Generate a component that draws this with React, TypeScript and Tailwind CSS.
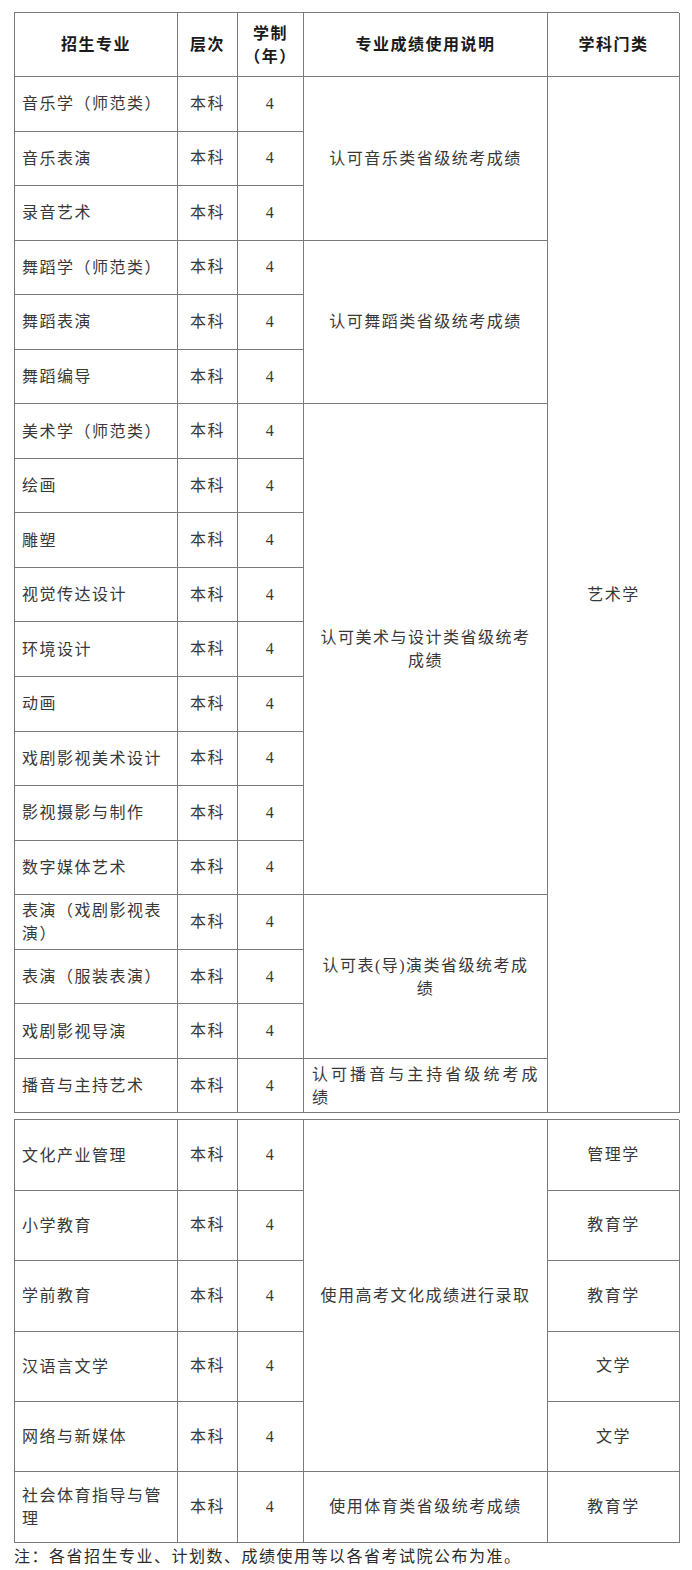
import { Fragment } from 'react';

const font = { fontFamily: '"Liberation Serif", "Noto Sans CJK SC", serif' };

type Row = { name: string; desc?: string; span?: number; justify?: boolean; pad?: string };

const artRows: Row[] = [
  { name: '音乐学（师范类）', desc: '认可音乐类省级统考成绩', span: 3 },
  { name: '音乐表演' },
  { name: '录音艺术' },
  { name: '舞蹈学（师范类）', desc: '认可舞蹈类省级统考成绩', span: 3 },
  { name: '舞蹈表演' },
  { name: '舞蹈编导' },
  { name: '美术学（师范类）', desc: '认可美术与设计类省级统考成绩', span: 9 },
  { name: '绘画' },
  { name: '雕塑' },
  { name: '视觉传达设计' },
  { name: '环境设计' },
  { name: '动画' },
  { name: '戏剧影视美术设计' },
  { name: '影视摄影与制作' },
  { name: '数字媒体艺术' },
  { name: '表演（戏剧影视表演）', desc: '认可表(导)演类省级统考成绩', span: 3, pad: 'px-[16px]' },
  { name: '表演（服装表演）' },
  { name: '戏剧影视导演' },
  { name: '播音与主持艺术', desc: '认可播音与主持省级统考成绩', span: 1, justify: true },
];

const otherRows = [
  { name: '文化产业管理', cat: '管理学' },
  { name: '小学教育', cat: '教育学' },
  { name: '学前教育', cat: '教育学' },
  { name: '汉语言文学', cat: '文学' },
  { name: '网络与新媒体', cat: '文学' },
  { name: '社会体育指导与管理', cat: '教育学' },
];

const cell = 'border-r border-b border-[#7a7a7a] flex items-center';
const center = `${cell} justify-center text-center`;
const head = `${center} font-bold text-[#1a1a1a]`;
const spans: Record<number, string> = {
  1: 'row-span-1',
  3: 'row-span-3',
  5: 'row-span-5',
  9: 'row-span-9',
};

export default function App() {
  return (
    <div className="bg-white w-[692px] h-[1570px] pl-[14px] pt-[12px] text-[16px] tracking-[1.5px] text-[#383838]" style={font}>
      <div className="grid grid-cols-[163px_60px_66px_244px_132px] grid-rows-[64px_repeat(19,54.55px)] w-[665px] border-t border-l border-[#7a7a7a]">
        <div className={head}>招生专业</div>
        <div className={head}>层次</div>
        <div className={`${head} leading-[23px] px-[4px]`}>学制（年）</div>
        <div className={head}>专业成绩使用说明</div>
        <div className={head}>学科门类</div>
        {artRows.map((r, i) => (
          <Fragment key={r.name}>
            <div className={`${cell} pl-[7px] pr-[6px] leading-[23px]`}>{r.name}</div>
            <div className={center}>本科</div>
            <div className={center}>4</div>
            {r.desc && (
              <div
                className={
                  r.justify
                    ? `${cell} ${spans[r.span ?? 1]} px-[8px] leading-[23px] text-justify`
                    : `${center} ${spans[r.span ?? 1]} ${r.pad ?? 'px-[8px]'} leading-[23px]`
                }
              >
                {r.desc}
              </div>
            )}
            {i === 0 && <div className={`${center} row-span-19`}>艺术学</div>}
          </Fragment>
        ))}
      </div>

      <div className="mt-[6px] grid grid-cols-[163px_60px_66px_244px_132px] grid-rows-[repeat(6,70.4px)] w-[665px] border-t border-l border-[#7a7a7a]">
        {otherRows.map((r, i) => (
          <Fragment key={r.name}>
            <div className={`${cell} pl-[7px] pr-[6px] leading-[23px]`}>{r.name}</div>
            <div className={center}>本科</div>
            <div className={center}>4</div>
            {i === 0 && <div className={`${center} row-span-5 px-[8px]`}>使用高考文化成绩进行录取</div>}
            {i === 5 && <div className={`${center} px-[8px]`}>使用体育类省级统考成绩</div>}
            <div className={center}>{r.cat}</div>
          </Fragment>
        ))}
      </div>

      <p className="mt-[2px] leading-[24px] text-[#2a2a2a]">注：各省招生专业、计划数、成绩使用等以各省考试院公布为准。</p>
    </div>
  );
}
